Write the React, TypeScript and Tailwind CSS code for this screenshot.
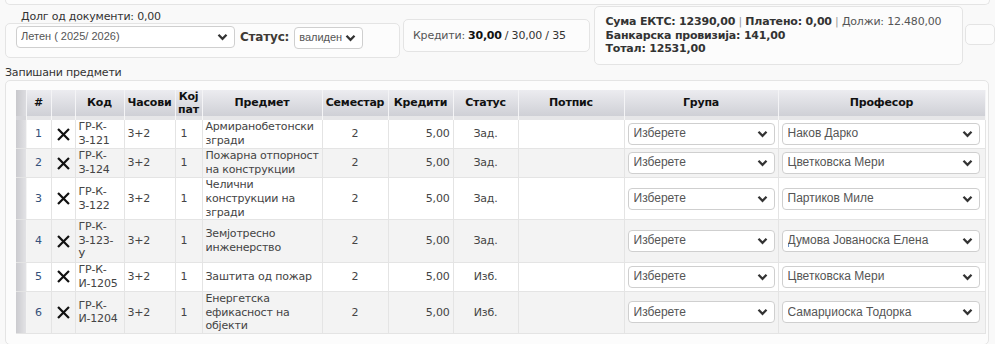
import type { ReactNode } from "react";

type Row = {
  n: number;
  code: string[];
  subject: string[];
  status: string;
  prof: string;
};

const rows: Row[] = [
  { n: 1, code: ["ГР-К-", "З-121"], subject: ["Армиранобетонски", "згради"], status: "Зад.", prof: "Наков Дарко" },
  { n: 2, code: ["ГР-К-", "З-124"], subject: ["Пожарна отпорност", "на конструкции"], status: "Зад.", prof: "Цветковска Мери" },
  { n: 3, code: ["ГР-К-", "З-122"], subject: ["Челични", "конструкции на", "згради"], status: "Зад.", prof: "Партиков Миле" },
  { n: 4, code: ["ГР-К-", "З-123-", "У"], subject: ["Земјотресно", "инженерство"], status: "Зад.", prof: "Думова Јованоска Елена" },
  { n: 5, code: ["ГР-К-", "И-1205"], subject: ["Заштита од пожар"], status: "Изб.", prof: "Цветковска Мери" },
  { n: 6, code: ["ГР-К-", "И-1204"], subject: ["Енергетска", "ефикасност на", "објекти"], status: "Изб.", prof: "Самарџиоска Тодорка" },
];

function Chevron() {
  return (
    <svg width="11" height="8" viewBox="0 0 11 8" className="pointer-events-none absolute right-[7px] top-1/2 -translate-y-1/2">
      <polyline points="1.5,1.8 5.5,5.8 9.5,1.8" fill="none" stroke="#333" strokeWidth="2.3" />
    </svg>
  );
}

function Select({ value, className, small }: { value: string; className: string; small?: boolean }) {
  return (
    <div className={`relative ${className}`}>
      <select
        defaultValue={value}
        className={`block h-[22px] w-full appearance-none rounded-[4px] border border-[#cfcfcf] bg-white font-['Liberation_Sans',Arial,sans-serif] tracking-normal text-[#555] outline-none ${small ? "pl-[4px] pr-[14px] text-[11px]" : "pl-[5px] pr-[20px] text-[12px]"}`}
      >
        <option>{value}</option>
      </select>
      <Chevron />
    </div>
  );
}

function Lines({ items }: { items: string[] }) {
  const out: ReactNode[] = [];
  items.forEach((t, i) => {
    if (i > 0) out.push(<br key={"b" + i} />);
    out.push(<span key={i}>{t}</span>);
  });
  return <>{out}</>;
}

function Cross() {
  return (
    <svg width="13" height="13" viewBox="0 0 13 13" className="mx-auto block">
      <path d="M1.8 1.8 L11.2 11.2 M11.2 1.8 L1.8 11.2" stroke="#111" strokeWidth="2.2" strokeLinecap="square" />
    </svg>
  );
}

const widths = [10, 25, 24, 49, 51, 27, 120, 66, 65, 65, 106, 154, 207];

export default function App() {
  const th = "border-r border-[#f4f4f6] p-0 font-bold text-[#111] align-middle";
  const td = "border-r border-b border-[#e4e4e4] p-0 align-middle whitespace-nowrap";

  return (
    <div className="min-h-screen bg-[#f9f9f9] font-['DejaVu_Sans',Verdana,sans-serif] text-[11px] leading-[13.5px] tracking-[-0.2px] text-[#333]">
      {/* previous panel, cut off at the top */}
      <div className="ml-[5px] h-[5px] w-[985px] rounded-b-[5px] border border-t-0 border-[#e4e4e4] bg-[#fcfcfc]" />

      {/* summary row */}
      <div className="flex h-[61px] items-start pl-[5px]">
        <div className="mt-[5px]">
          <div className="pl-[16px] leading-[13px]">Долг од документи: 0,00</div>
          <div className="flex h-[35px] w-[395px] items-start gap-[5px] rounded-[5px] border border-[#e4e4e4] bg-[#fcfcfc] pl-[10px] pt-[2px]">
            <Select value="Летен ( 2025/ 2026)" className="w-[219px]" small />
            <span className="mt-[5px] text-[12px] font-bold text-[#3e3a35]">Статус:</span>
            <Select value="валиден" className="mt-[1px] w-[69px]" small />
          </div>
        </div>

        <div className="ml-[3px] mt-[14px] flex h-[33px] w-[190px] items-center rounded-[5px] border border-[#e4e4e4] bg-[#fcfcfc] pl-[9px] text-[#555]">
          <span>Кредити: </span>
          <b className="ml-[3px] text-[#111]">30,00</b>
          <span className="ml-[3px] text-[#333]">/ 30,00 / 35</span>
        </div>

        <div className="ml-[4px] mt-[1px] h-[59px] w-[374px] rounded-[5px] border border-[#e4e4e4] bg-[#fcfcfc] pl-[10px] pt-[8px] text-[#333]">
          <div>
            <b>Сума ЕКТС: 12390,00</b> <span className="text-[#999]">|</span> <b>Платено: 0,00</b>{" "}
            <span className="text-[#999]">|</span> <span className="text-[#555]">Должи: 12.480,00</span>
          </div>
          <div>
            <b>Банкарска провизија: 141,00</b>
          </div>
          <div>
            <b>Тотал: 12531,00</b>
          </div>
        </div>

        <div className="ml-[2px] mt-[19px] h-[21px] w-[30px] rounded-[5px] border border-[#e4e4e4] bg-[#fcfcfc]" />
      </div>

      <div className="pl-[5px] leading-[14px]">Запишани предмети</div>

      {/* enrolled subjects */}
      <div className="ml-[5px] w-[984px] rounded-[5px] border border-[#e4e4e4] bg-[#fcfcfc] pb-[10px] pl-[10px] pt-[9px]">
        <table className="table-fixed border-collapse" style={{ width: 969 }}>
          <colgroup>
            {widths.map((w, i) => (
              <col key={i} style={{ width: w }} />
            ))}
          </colgroup>
          <thead>
            <tr className="h-[25px] bg-gradient-to-b from-[#ececf0] to-[#cfd0d6]">
              <th className={`${th} bg-gradient-to-r from-[#c8c8cc] to-[#dcdce0]`} />
              <th className={th}>#</th>
              <th className={th} />
              <th className={th}>Код</th>
              <th className={th}>Часови</th>
              <th className={`${th} leading-[13px]`}>
                Кој
                <br />
                пат
              </th>
              <th className={th}>Предмет</th>
              <th className={th}>Семестар</th>
              <th className={th}>Кредити</th>
              <th className={th}>Статус</th>
              <th className={th}>Потпис</th>
              <th className={th}>Група</th>
              <th className={th}>Професор</th>
            </tr>
            <tr className="h-[4px]">
              {widths.map((_, i) => (
                <td key={i} className={`border-r border-[#f6f6f6] p-0 ${i === 0 ? "bg-[#d6d6da]" : "bg-[#e6e6e8]"}`} />
              ))}
            </tr>
          </thead>
          <tbody className="leading-[13.8px] text-[#444]">
            {rows.map((r, i) => (
              <tr key={r.n} className={i % 2 === 0 ? "bg-white" : "bg-[#f3f3f3]"}>
                <td className={`${td} border-r-[#f4f4f4] bg-gradient-to-r from-[#cbcbcf] to-[#e2e2e5]`} />
                <td className={`${td} text-center text-[#34507a]`}>{r.n}</td>
                <td className={td}>
                  <Cross />
                </td>
                <td className={`${td} pl-[3px]`}>
                  <Lines items={r.code} />
                </td>
                <td className={`${td} pl-[3px]`}>3+2</td>
                <td className={`${td} pl-[5px]`}>1</td>
                <td className={`${td} pl-[3px]`}>
                  <Lines items={r.subject} />
                </td>
                <td className={`${td} text-center`}>2</td>
                <td className={`${td} pr-[3px] text-right`}>5,00</td>
                <td className={`${td} text-center`}>{r.status}</td>
                <td className={td} />
                <td className={`${td} px-[3px] py-[3px]`}>
                  <Select value="Изберете" className="w-full" />
                </td>
                <td className={`${td} pl-[3px] pr-[5px] py-[3px]`}>
                  <Select value={r.prof} className="w-full" />
                </td>
              </tr>
            ))}
          </tbody>
        </table>
      </div>
    </div>
  );
}
